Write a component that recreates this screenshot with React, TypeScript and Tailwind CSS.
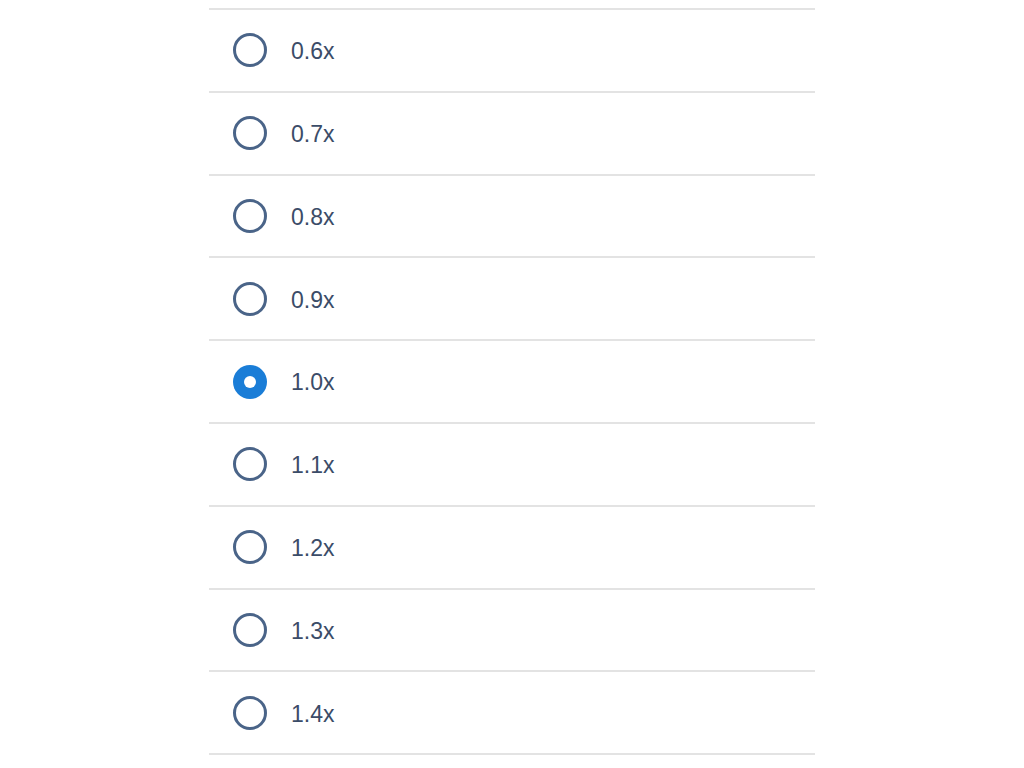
import React from "react";

const speeds = ["0.6x", "0.7x", "0.8x", "0.9x", "1.0x", "1.1x", "1.2x", "1.3x", "1.4x"];

function Radio({ checked }: { checked: boolean }) {
  if (checked) {
    return (
      <span className="flex h-[34px] w-[34px] shrink-0 items-center justify-center rounded-full bg-[#1a7dd7]">
        <span className="h-[12px] w-[12px] rounded-full bg-white" />
      </span>
    );
  }
  return <span className="h-[34px] w-[34px] shrink-0 rounded-full border-[3px] border-[#4a6488]" />;
}

export default function App() {
  const selected = "1.0x";

  return (
    <div className="min-h-[768px] bg-white font-['Liberation_Sans',Arial,sans-serif]">
      <div className="mx-auto w-[606px] pt-2">
        <ul className="border-t-2 border-[#e3e3e3]">
          {speeds.map((s) => (
            <li
              key={s}
              className="flex h-[82.8px] items-center gap-6 border-b-2 border-[#e3e3e3] pl-6"
            >
              <Radio checked={s === selected} />
              <span className="pt-[2px] text-[23px] text-[#3b4c68]">{s}</span>
            </li>
          ))}
        </ul>
      </div>
    </div>
  );
}
